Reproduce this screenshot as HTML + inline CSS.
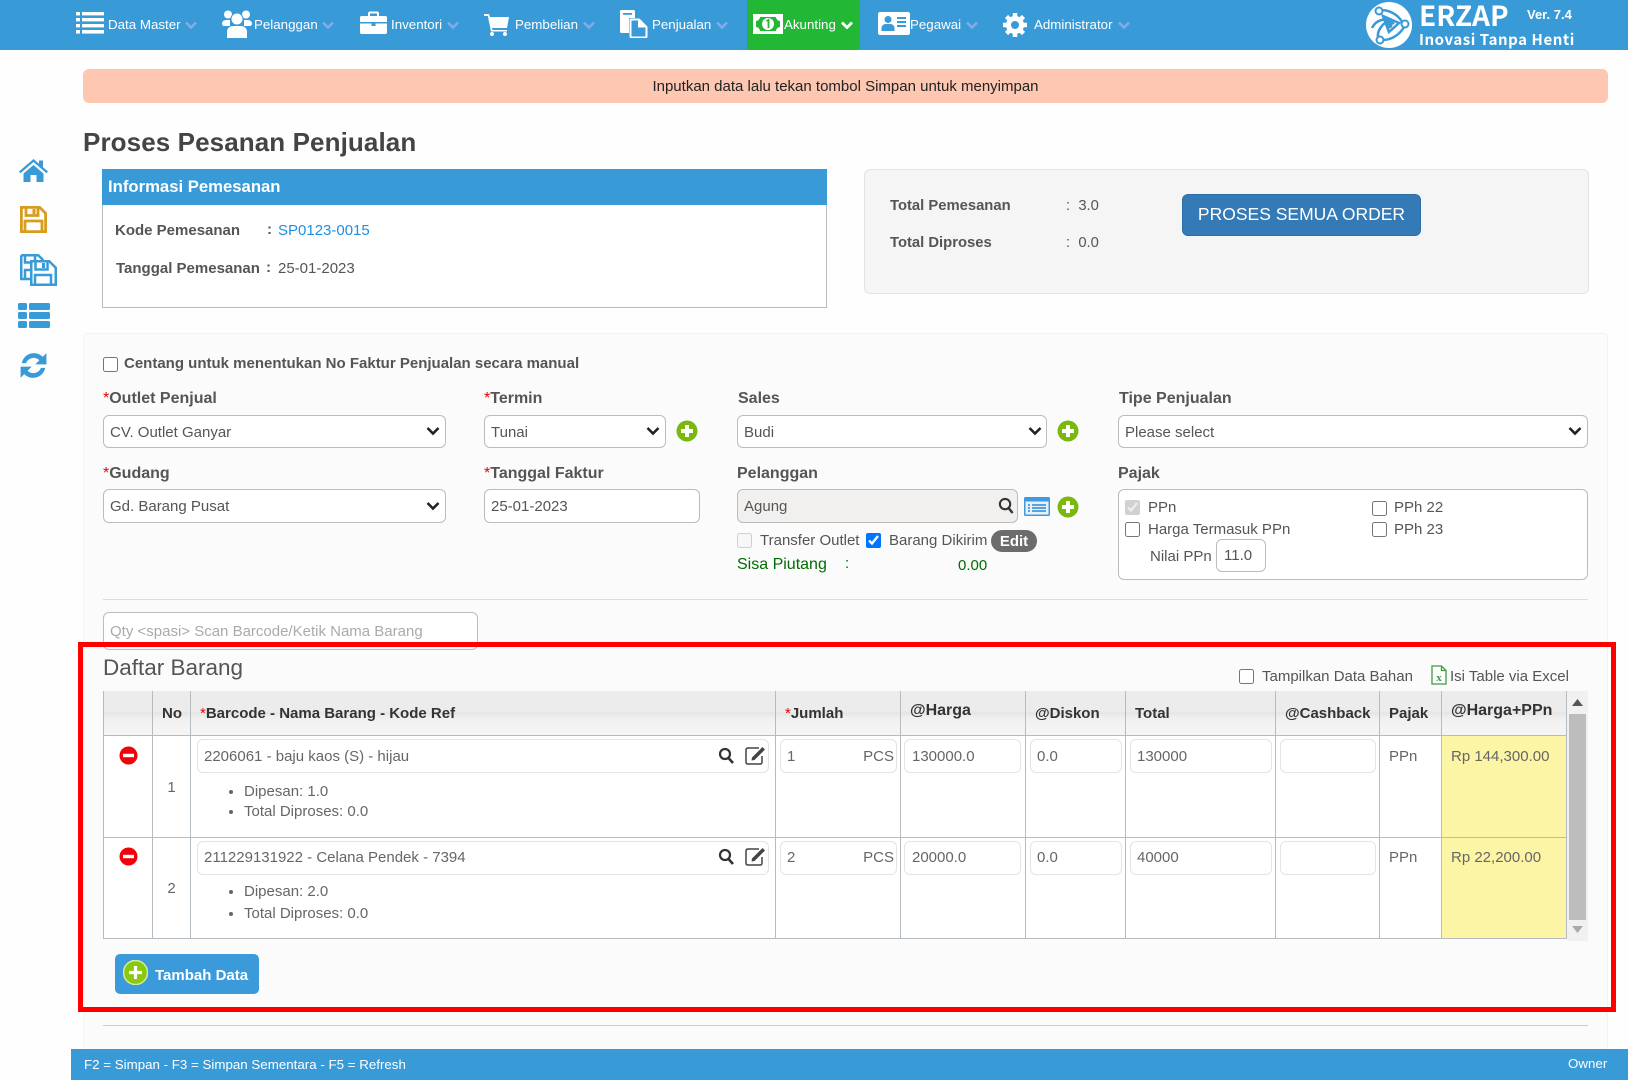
<!DOCTYPE html>
<html lang="id">
<head>
<meta charset="utf-8">
<title>Proses Pesanan Penjualan</title>
<style>
*{box-sizing:border-box}
html,body{margin:0;padding:0}
body{width:1628px;height:1080px;position:relative;overflow:hidden;background:#fefefe;font-family:"Liberation Sans",Arial,sans-serif;font-size:15px;color:#555}
.a{position:absolute}
.t{position:absolute;line-height:20px;white-space:nowrap}
.nav{position:absolute;left:0;top:0;width:1628px;height:50px;background:#399ad8}
.nav .t{color:#fff;font-size:13.33px;top:15px}
.nav svg{position:absolute}
.chev{position:absolute;top:21px;width:12px;height:9px}
.lb{font-weight:bold;font-size:16px;color:#555}
.lb i{color:#e00;font-style:normal;font-weight:normal}
select,input[type=text]{position:absolute;margin:0;background:#fff;border:1px solid #bcbcbc;border-radius:6px;font:15px "Liberation Sans",Arial,sans-serif;color:#555;padding:0 6px;outline:none}
select{-webkit-appearance:none;appearance:none;padding-top:2px}
input::placeholder{color:#aaa;opacity:1}
.sc{position:absolute;width:14px;height:10px;pointer-events:none}
input[type=checkbox]{position:absolute;margin:0;width:15px;height:15px}
.grid{position:absolute;left:103px;top:691px;width:1463px;border-collapse:collapse;table-layout:fixed;font-size:15px;color:#666}
.grid th,.grid td{border:1px solid #b4bcc2;position:relative;padding:0;vertical-align:top}
.grid th{height:44px;border-top:0;background:linear-gradient(#ececec 0,#ececec 45%,#e5e5e5 50%,#f0f0f0 60%,#f5f5f5 100%);text-align:left;font-size:15px;color:#333;font-weight:bold}
.grid th span{position:absolute;left:9px;top:13px;line-height:20px;white-space:nowrap}
.grid th span.up{top:10px;font-size:16px}
.grid th i{color:#e00;font-style:normal;font-weight:normal}
.grid td{background:#fff}
.grid input[type=text]{left:4px;top:3px;height:34px;border:1px solid #e4e4e4;color:#666;font-size:15px}
.grid input.r1[type=text]{padding-top:2px}
.grid ul{position:absolute;left:34px;margin:0;padding:0 0 0 19px;font-size:15px;color:#666}
.celltxt{position:absolute;left:9px;top:11px;line-height:20px;white-space:nowrap}
.no{position:absolute;left:0;right:0;text-align:center;line-height:20px}
</style>
</head>
<body>

<div class="nav">
  <svg style="left:76px;top:12px" width="28" height="22" viewBox="0 0 28 22" fill="#fff"><rect x="0" y="0" width="4" height="3.4"/><rect x="6" y="0" width="22" height="3.4"/><rect x="0" y="6" width="4" height="3.4"/><rect x="6" y="6" width="22" height="3.4"/><rect x="0" y="12" width="4" height="3.4"/><rect x="6" y="12" width="22" height="3.4"/><rect x="0" y="18" width="4" height="3.6"/><rect x="6" y="18" width="22" height="3.6"/></svg>
  <div class="t" style="left:108px">Data Master</div>
  <svg class="chev" style="left:185px" viewBox="0 0 12 9"><path d="M1 1.500l5 5 5-5" fill="none" stroke="#84abe8" stroke-width="2.6"/></svg>

  <svg style="left:222px;top:10px" width="30" height="28" viewBox="0 0 30 28" fill="#fff"><circle cx="6" cy="4.500" r="4"/><circle cx="24" cy="4.500" r="4"/><circle cx="15" cy="9" r="6" stroke="#399ad8" stroke-width="1"/><path d="M0 14c0-3 2-4 5-4h3v6H1zM30 14c0-3-2-4-5-4h-3v6h7z"/><path d="M5 28v-6c0-4 3-6 6-6h8c3 0 6 2 6 6v6z"/></svg>
  <div class="t" style="left:254px">Pelanggan</div>
  <svg class="chev" style="left:322px" viewBox="0 0 12 9"><path d="M1 1.500l5 5 5-5" fill="none" stroke="#84abe8" stroke-width="2.6"/></svg>

  <svg style="left:360px;top:11px" width="27" height="23" viewBox="0 0 27 23" fill="#fff"><path d="M8 5V2.500C8 1 9 .5 10 .5h7c1 0 2 .5 2 2V5h-2V2.500h-7V5z"/><path d="M1.500 5h24c.8 0 1.500.7 1.500 1.500V11H0V6.500C0 5.700.7 5 1.500 5z"/><path d="M0 12.500h11.500v2.500h4v-2.500H27v9c0 .8-.7 1.500-1.500 1.500h-24C.7 23 0 22.300 0 21.500z"/></svg>
  <div class="t" style="left:391px">Inventori</div>
  <svg class="chev" style="left:447px" viewBox="0 0 12 9"><path d="M1 1.500l5 5 5-5" fill="none" stroke="#84abe8" stroke-width="2.6"/></svg>

  <svg style="left:484px;top:14px" width="25" height="22" viewBox="0 0 25 22" fill="#fff"><path d="M0 0h5l1 3h19l-2 11H8l.5 2H23v1.500H7L3.800 2H0z"/><circle cx="8" cy="20" r="2"/><circle cx="21" cy="20" r="2"/></svg>
  <div class="t" style="left:515px">Pembelian</div>
  <svg class="chev" style="left:583px" viewBox="0 0 12 9"><path d="M1 1.500l5 5 5-5" fill="none" stroke="#84abe8" stroke-width="2.6"/></svg>

  <svg style="left:620px;top:10px" width="28" height="28" viewBox="0 0 28 28" fill="#fff"><path d="M1.500 0h12c.9 0 1.500.6 1.500 1.500V8h-4.500C8.500 8 9 9.500 9 11v12H1.500C.6 23 0 22.400 0 21.500v-20C0 .6.600 0 1.500 0z"/><rect x="3" y="3" width="9" height="1.800" fill="#399ad8"/><path d="M11 9.500h8l7.500 7.500v9.500c0 .5-.5 1-1 1H11.500c-.5 0-1-.5-1-1V10z" fill="#399ad8" stroke="#fff" stroke-width="2"/><path d="M18 9v8.500h8.500z"/></svg>
  <div class="t" style="left:652px">Penjualan</div>
  <svg class="chev" style="left:716px" viewBox="0 0 12 9"><path d="M1 1.500l5 5 5-5" fill="none" stroke="#84abe8" stroke-width="2.6"/></svg>

  <div class="a" style="left:747px;top:0;width:113px;height:50px;background:#22b735"></div>
  <svg style="left:753px;top:14px" width="30" height="20" viewBox="0 0 30 20"><rect x="0" y="0" width="30" height="20" fill="#fff"/><path d="M7 3h16c0 2 2 4 4 4v6c-2 0-4 2-4 4H7c0-2-2-4-4-4V7c2 0 4-2 4-4z" fill="#22b735"/><circle cx="15" cy="10" r="6" fill="#fff"/><path d="M13.500 7l2-1v8" fill="none" stroke="#22b735" stroke-width="1.800"/></svg>
  <div class="t" style="left:784px">Akunting</div>
  <svg class="chev" style="left:841px" viewBox="0 0 12 9"><path d="M1 1.500l5 5 5-5" fill="none" stroke="#fff" stroke-width="2.800"/></svg>

  <svg style="left:878px;top:12px" width="32" height="24" viewBox="0 0 32 24"><path d="M2 0h28c1 0 2 1 2 2v19c0 1-1 2-2 2H2c-1 0-2-1-2-2V2C0 1 1 0 2 0z" fill="#fff"/><circle cx="10" cy="7.500" r="3.500" fill="#399ad8"/><path d="M3.500 19v-3c0-2 2-4 4-4h5c2 0 4 2 4 4v3z" fill="#399ad8"/><path d="M19 6h9M19 10h9M19 14h9" stroke="#399ad8" stroke-width="2"/></svg>
  <div class="t" style="left:910px">Pegawai</div>
  <svg class="chev" style="left:966px" viewBox="0 0 12 9"><path d="M1 1.500l5 5 5-5" fill="none" stroke="#84abe8" stroke-width="2.6"/></svg>

  <svg style="left:1003px;top:13px" width="24" height="24" viewBox="0 0 24 24"><circle cx="12" cy="12" r="6.500" fill="none" stroke="#fff" stroke-width="5"/><g stroke="#fff" stroke-width="4.500"><path d="M12 0v5M12 19v5M0 12h5M19 12h5M3.500 3.500l3.500 3.500M17 17l3.500 3.500M3.500 20.500L7 17M17 7l3.500-3.500"/></g></svg>
  <div class="t" style="left:1034px">Administrator</div>
  <svg class="chev" style="left:1118px" viewBox="0 0 12 9"><path d="M1 1.500l5 5 5-5" fill="none" stroke="#84abe8" stroke-width="2.6"/></svg>

  <svg style="left:1366px;top:2px" width="46" height="46" viewBox="0 0 46 46"><circle cx="23" cy="23" r="23" fill="#fff"/><g fill="none" stroke="#399ad8" stroke-width="2.500"><path d="M11 10c8-5 22 2 26 12"/><path d="M6 26c4-8 14-12 22-4"/><path d="M13 38c-4-8 4-18 12-20"/><path d="M39 22c-2 8-12 16-22 16"/><path d="M17 14l6 16 10-9z"/></g><circle cx="23" cy="23" r="3.500" fill="#399ad8"/><circle cx="13" cy="9" r="3.500" fill="#fff" stroke="#399ad8" stroke-width="2"/><circle cx="39" cy="22" r="3.500" fill="#fff" stroke="#399ad8" stroke-width="2"/><circle cx="14" cy="38" r="3.500" fill="#fff" stroke="#399ad8" stroke-width="2"/></svg>
  <div class="t" style="left:1419px;top:-1px;font:bold 28px/32px 'Noto Sans CJK JP','Liberation Sans',sans-serif">ERZAP</div>
  <div class="t" style="left:1527px;top:5px;font-size:13px;font-weight:bold">Ver. 7.4</div>
  <div class="t" style="left:1419px;top:30px;font:bold 15px/20px 'Noto Sans CJK JP','Liberation Sans',sans-serif;letter-spacing:.55px">Inovasi Tanpa Henti</div>
</div>

<!-- left toolbar -->
<svg class="a" style="left:19px;top:159px" width="29" height="23" viewBox="0 0 29 23" fill="#399ad8"><path d="M14.500 0L0 12.500l1.500 1.800L14.500 3l13 11.300 1.500-1.800L24 8.200V1.500h-4v3.300z"/><path d="M4.500 14.500l10-8.500 10 8.500V23H17.500v-7h-6v7H4.500z"/></svg>
<svg class="a" style="left:20px;top:206px" width="27" height="27" viewBox="0 0 27 27" fill="none" stroke="#d89c1e" stroke-width="2.800"><path d="M1.400 1.400h18.300l5.900 5.900v18.300H1.400z"/><path d="M6 1.500v8h12v-8"/><rect x="12.500" y="3" width="3" height="5" fill="#d89c1e" stroke="none"/><path d="M5 25.500V15h17v10.500"/></svg>
<svg class="a" style="left:20px;top:254px" width="37" height="32" viewBox="0 0 37 32" fill="none" stroke="#399ad8" stroke-width="2.500"><path d="M1.250 1.250h17l5 5M1.250 1.250V25h9"/><path d="M5 1.500v7h10v-7"/><path d="M5 24v-8h5"/><path d="M11.250 7.250h18l6.500 6.500v17h-24.500z" fill="#fefefe"/><path d="M15.500 7.500v8h12v-8"/><rect x="22" y="9" width="3" height="5" fill="#399ad8" stroke="none"/><path d="M15 30.500V21h16v9.500"/></svg>
<svg class="a" style="left:18px;top:303px" width="32" height="25" viewBox="0 0 32 25" fill="#399ad8"><rect x="0" y="0" width="9" height="7" rx="1.500"/><rect x="11" y="0" width="21" height="7" rx="1.500"/><rect x="0" y="9" width="9" height="7" rx="1.500"/><rect x="11" y="9" width="21" height="7" rx="1.500"/><rect x="0" y="18" width="9" height="7" rx="1.500"/><rect x="11" y="18" width="21" height="7" rx="1.500"/></svg>
<svg class="a" style="left:20px;top:352px" width="27" height="27" viewBox="2 2 23 23" fill="#399ad8"><path d="M3.500 11.500C4.500 6.500 8.800 3 13.800 3c3 0 5.600 1.200 7.500 3.200L24.500 3v9.500H15l3.500-3.500c-1.200-1.300-2.900-2-4.700-2-3 0-5.700 1.900-6.600 4.500z"/><path d="M23.500 15.500C22.500 20.500 18.200 24 13.200 24c-3 0-5.600-1.200-7.500-3.200L2.500 24v-9.500H12L8.500 18c1.200 1.300 2.900 2 4.700 2 3 0 5.700-1.900 6.600-4.500z"/></svg>

<!-- alert -->
<div class="a" style="left:83px;top:69px;width:1525px;height:34px;background:#fec7b1;border-radius:6px;text-align:center;line-height:36px;color:#222;font-size:15px">Inputkan data lalu tekan tombol Simpan untuk menyimpan</div>

<div class="t" style="left:83px;top:129px;font-size:26px;line-height:26px;font-weight:bold;color:#444;letter-spacing:.1px">Proses Pesanan Penjualan</div>

<!-- info panel -->
<div class="a" style="left:102px;top:169px;width:725px;height:139px;background:#fff;border:1px solid #bbb;border-top:0">
  <div class="a" style="left:-1px;top:0;width:725px;height:36px;background:#399ad8;color:#fff;font-weight:bold;font-size:16.7px;line-height:35px;padding-left:6px">Informasi Pemesanan</div>
</div>
<div class="t" style="left:115px;top:221px;font-weight:bold;font-size:15px">Kode Pemesanan</div>
<div class="t" style="left:267px;top:220px;font-weight:bold">:</div>
<div class="t" style="left:278px;top:221px;color:#1e8fe0;font-size:15px">SP0123-0015</div>
<div class="t" style="left:116px;top:259px;font-weight:bold;font-size:15px">Tanggal Pemesanan</div>
<div class="t" style="left:266px;top:258px;font-weight:bold">:</div>
<div class="t" style="left:278px;top:259px;font-size:15px">25-01-2023</div>

<!-- total panel -->
<div class="a" style="left:864px;top:169px;width:725px;height:125px;background:#f5f5f5;border:1px solid #e3e3e3;border-radius:6px"></div>
<div class="t" style="left:890px;top:196px;font-weight:bold;font-size:14.8px">Total Pemesanan</div>
<div class="t" style="left:1066px;top:196px;font-size:14.8px">:&nbsp; 3.0</div>
<div class="t" style="left:890px;top:233px;font-weight:bold;font-size:14.8px">Total Diproses</div>
<div class="t" style="left:1066px;top:233px;font-size:14.8px">:&nbsp; 0.0</div>
<div class="a" style="left:1182px;top:194px;width:239px;height:42px;background:#337ab7;border:1px solid #2e6da4;border-radius:6px;color:#fff;font-size:17.5px;line-height:38px;text-align:center">PROSES SEMUA ORDER</div>

<!-- form panel -->
<div class="a" style="left:83px;top:333px;width:1525px;height:716px;background:#fbfbfb;border:1px solid #f3f3f3;border-bottom:0;border-radius:4px 4px 0 0"></div>

<input type="checkbox" style="left:103px;top:357px">
<div class="t" style="left:124px;top:354px;font-weight:bold;font-size:15px">Centang untuk menentukan No Faktur Penjualan secara manual</div>

<div class="t lb" style="left:103px;top:389px"><i>*</i>Outlet Penjual</div>
<select style="left:103px;top:415px;width:343px;height:33px"><option>CV. Outlet Ganyar</option></select>
<svg class="sc" style="left:426px;top:426px" viewBox="0 0 14 10"><path d="M1.500 2l5.500 5.500L12.500 2" fill="none" stroke="#222" stroke-width="2.600"/></svg>
<div class="t lb" style="left:484px;top:389px"><i>*</i>Termin</div>
<select style="left:484px;top:415px;width:182px;height:33px"><option>Tunai</option></select>
<svg class="sc" style="left:646px;top:426px" viewBox="0 0 14 10"><path d="M1.500 2l5.500 5.500L12.500 2" fill="none" stroke="#222" stroke-width="2.600"/></svg>
<svg class="a" style="left:676px;top:420px" width="22" height="22" viewBox="0 0 22 22"><circle cx="11" cy="11" r="10.500" fill="#7ab80e"/><path d="M11 5v12M5 11h12" stroke="#fff" stroke-width="4"/></svg>
<div class="t lb" style="left:738px;top:389px">Sales</div>
<select style="left:737px;top:415px;width:310px;height:33px"><option>Budi</option></select>
<svg class="sc" style="left:1028px;top:426px" viewBox="0 0 14 10"><path d="M1.500 2l5.500 5.500L12.500 2" fill="none" stroke="#222" stroke-width="2.600"/></svg>
<svg class="a" style="left:1057px;top:420px" width="22" height="22" viewBox="0 0 22 22"><circle cx="11" cy="11" r="10.500" fill="#7ab80e"/><path d="M11 5v12M5 11h12" stroke="#fff" stroke-width="4"/></svg>
<div class="t lb" style="left:1119px;top:389px">Tipe Penjualan</div>
<select style="left:1118px;top:415px;width:470px;height:33px"><option>Please select</option></select>
<svg class="sc" style="left:1568px;top:426px" viewBox="0 0 14 10"><path d="M1.500 2l5.500 5.500L12.500 2" fill="none" stroke="#222" stroke-width="2.600"/></svg>

<div class="t lb" style="left:103px;top:464px"><i>*</i>Gudang</div>
<select style="left:103px;top:489px;width:343px;height:34px;padding-top:0"><option>Gd. Barang Pusat</option></select>
<svg class="sc" style="left:426px;top:501px" viewBox="0 0 14 10"><path d="M1.500 2l5.500 5.500L12.500 2" fill="none" stroke="#222" stroke-width="2.600"/></svg>
<div class="t lb" style="left:484px;top:464px"><i>*</i>Tanggal Faktur</div>
<input type="text" value="25-01-2023" style="left:484px;top:489px;width:216px;height:34px">
<div class="t lb" style="left:737px;top:464px">Pelanggan</div>
<input type="text" value="Agung" style="left:737px;top:489px;width:281px;height:34px;background:#f2f0ef">
<svg class="a" style="left:998px;top:497px" width="16" height="17" viewBox="0 0 17 18" fill="none" stroke="#333" stroke-width="2.200"><circle cx="7.500" cy="7.500" r="5.500"/><path d="M11.500 12l4 5" stroke-width="2.600"/></svg>
<svg class="a" style="left:1024px;top:497px" width="26" height="19" viewBox="0 0 26 19"><rect width="26" height="19" rx="1.500" fill="#3f9ae0"/><rect x="1.500" y="4.500" width="23" height="13" fill="#e6f2fb"/><path d="M4 8h2M8 8h14M4 11h2M8 11h14M4 14h2M8 14h14" stroke="#2f86cf" stroke-width="1.500"/></svg>
<svg class="a" style="left:1057px;top:496px" width="22" height="22" viewBox="0 0 22 22"><circle cx="11" cy="11" r="10.500" fill="#7ab80e"/><path d="M11 5v12M5 11h12" stroke="#fff" stroke-width="4"/></svg>

<input type="checkbox" disabled style="left:737px;top:533px">
<div class="t" style="left:760px;top:531px">Transfer Outlet</div>
<input type="checkbox" checked style="left:866px;top:533px">
<div class="t" style="left:889px;top:531px">Barang Dikirim</div>
<div class="a" style="left:991px;top:530px;width:46px;height:22px;border-radius:11px;background:#6c6c6c;color:#fff;font-weight:bold;font-size:15px;line-height:23px;text-align:center">Edit</div>
<div class="t" style="left:737px;top:555px;color:#006b00;font-size:16px">Sisa Piutang</div>
<div class="t" style="left:845px;top:554px;color:#006b00">:</div>
<div class="t" style="left:958px;top:556px;color:#006b00;font-size:15px">0.00</div>

<div class="t lb" style="left:1118px;top:464px">Pajak</div>
<div class="a" style="left:1118px;top:489px;width:470px;height:91px;background:#fff;border:1px solid #bcbcbc;border-radius:6px"></div>
<input type="checkbox" checked disabled style="left:1125px;top:500px">
<div class="t" style="left:1148px;top:498px">PPn</div>
<input type="checkbox" style="left:1125px;top:522px">
<div class="t" style="left:1148px;top:520px">Harga Termasuk PPn</div>
<input type="checkbox" style="left:1372px;top:501px">
<div class="t" style="left:1394px;top:498px">PPh 22</div>
<input type="checkbox" style="left:1372px;top:522px">
<div class="t" style="left:1394px;top:520px">PPh 23</div>
<div class="t" style="left:1150px;top:547px">Nilai PPn</div>
<input type="text" value="11.0" style="left:1216px;top:539px;width:50px;height:33px;padding-left:7px">

<div class="a" style="left:103px;top:599px;width:1485px;height:1px;background:#ddd"></div>
<input type="text" placeholder="Qty <spasi> Scan Barcode/Ketik Nama Barang" style="left:103px;top:612px;width:375px;height:38px">

<!-- red highlight -->
<div class="a" style="left:78px;top:642px;width:1538px;height:370px;border:5px solid #f00;z-index:5"></div>

<div class="t" style="left:103px;top:653px;font-size:22.5px;line-height:30px;color:#555">Daftar Barang</div>
<input type="checkbox" style="left:1239px;top:669px">
<div class="t" style="left:1262px;top:667px">Tampilkan Data Bahan</div>
<svg class="a" style="left:1431px;top:665px" width="16" height="20" viewBox="0 0 16 20" fill="none" stroke="#3f9a3f" stroke-width="1.300"><path d="M1 1h9.500L15 5.500V19H1z" fill="#fff"/><path d="M10.500 1v4.500H15"/><text x="8" y="16" font-family="Liberation Serif,serif" font-size="11" font-weight="bold" text-anchor="middle" fill="#3f9a3f" stroke="none">x</text></svg>
<div class="t" style="left:1450px;top:667px">Isi Table via Excel</div>

<table class="grid">
<colgroup><col style="width:49px"><col style="width:38px"><col style="width:585px"><col style="width:125px"><col style="width:125px"><col style="width:100px"><col style="width:150px"><col style="width:104px"><col style="width:62px"><col style="width:125px"></colgroup>
<tr>
<th></th>
<th><span>No</span></th>
<th><span><i>*</i>Barcode - Nama Barang - Kode Ref</span></th>
<th><span><i>*</i>Jumlah</span></th>
<th><span class="up">@Harga</span></th>
<th><span>@Diskon</span></th>
<th><span>Total</span></th>
<th><span>@Cashback</span></th>
<th><span>Pajak</span></th>
<th><span class="up">@Harga+PPn</span></th>
</tr>
<tr style="height:102px">
<td><svg class="a" style="left:15px;top:10px" width="19" height="19" viewBox="0 0 19 19"><circle cx="9.500" cy="9.500" r="9" fill="#f5000a"/><rect x="4" y="7.800" width="11" height="3.400" fill="#fff"/></svg></td>
<td><div class="no" style="top:42px">1</div></td>
<td><input class="r1" type="text" value="2206061 - baju kaos (S) - hijau" style="width:572px;left:6px">
<svg class="a" style="left:527px;top:11px" width="17" height="18" viewBox="0 0 17 18" fill="none" stroke="#333" stroke-width="2.200"><circle cx="7" cy="7" r="5"/><path d="M10.500 11l4.500 5" stroke-width="2.600"/></svg>
<svg class="a" style="left:554px;top:9px" width="22" height="20" viewBox="0 0 22 20" fill="none" stroke="#444" stroke-width="1.500"><path d="M14 3H3C1.800 3 1 3.800 1 5v12c0 1.200.8 2 2 2h12c1.200 0 2-.8 2-2v-6"/><path d="M7 12.500L17.500 2l2.500 2.500L9.500 15l-3 .5z" fill="#444" stroke="none"/></svg>
<ul style="top:46px;line-height:20px"><li>Dipesan: 1.0</li><li>Total Diproses: 0.0</li></ul></td>
<td><input class="r1" type="text" value="1" style="width:117px"><div class="a" style="right:4px;top:11px;line-height:20px;padding-right:2px">PCS</div></td>
<td><input class="r1" type="text" value="130000.0" style="width:117px;left:3px;padding-left:7px"></td>
<td><input class="r1" type="text" value="0.0" style="width:92px"></td>
<td><input class="r1" type="text" value="130000" style="width:142px"></td>
<td><input type="text" value="" style="width:96px"></td>
<td><div class="celltxt">PPn</div></td>
<td style="background:#fcf5a5"><div class="celltxt">Rp 144,300.00</div></td>
</tr>
<tr style="height:101px">
<td><svg class="a" style="left:15px;top:9px" width="19" height="19" viewBox="0 0 19 19"><circle cx="9.500" cy="9.500" r="9" fill="#f5000a"/><rect x="4" y="7.800" width="11" height="3.400" fill="#fff"/></svg></td>
<td><div class="no" style="top:41px">2</div></td>
<td><input type="text" value="211229131922 - Celana Pendek - 7394" style="width:572px;left:6px">
<svg class="a" style="left:527px;top:10px" width="17" height="18" viewBox="0 0 17 18" fill="none" stroke="#333" stroke-width="2.200"><circle cx="7" cy="7" r="5"/><path d="M10.500 11l4.500 5" stroke-width="2.600"/></svg>
<svg class="a" style="left:554px;top:8px" width="22" height="20" viewBox="0 0 22 20" fill="none" stroke="#444" stroke-width="1.500"><path d="M14 3H3C1.800 3 1 3.800 1 5v12c0 1.200.8 2 2 2h12c1.200 0 2-.8 2-2v-6"/><path d="M7 12.500L17.500 2l2.500 2.500L9.500 15l-3 .5z" fill="#444" stroke="none"/></svg>
<ul style="top:43px;line-height:22px"><li>Dipesan: 2.0</li><li>Total Diproses: 0.0</li></ul></td>
<td><input type="text" value="2" style="width:117px"><div class="a" style="right:4px;top:10px;line-height:20px;padding-right:2px">PCS</div></td>
<td><input type="text" value="20000.0" style="width:117px;left:3px;padding-left:7px"></td>
<td><input type="text" value="0.0" style="width:92px"></td>
<td><input type="text" value="40000" style="width:142px"></td>
<td><input type="text" value="" style="width:96px"></td>
<td><div class="celltxt" style="top:10px">PPn</div></td>
<td style="background:#fcf5a5"><div class="celltxt" style="top:10px">Rp 22,200.00</div></td>
</tr>
</table>

<!-- scrollbar -->
<div class="a" style="left:1567px;top:691px;width:21px;height:250px;background:#f1f1f1"></div>
<div class="a" style="left:1569px;top:714px;width:17px;height:206px;background:#bdbdbd"></div>
<svg class="a" style="left:1571px;top:698px" width="13" height="9" viewBox="0 0 13 9"><path d="M6.500 1L12 8H1z" fill="#555"/></svg>
<svg class="a" style="left:1571px;top:925px" width="13" height="9" viewBox="0 0 13 9"><path d="M6.500 8L12 1H1z" fill="#aaa"/></svg>

<!-- add button -->
<div class="a" style="left:115px;top:954px;width:144px;height:40px;background:#3b9ad9;border-radius:5px"></div>
<svg class="a" style="left:123px;top:960px" width="25" height="25" viewBox="0 0 25 25"><circle cx="12.500" cy="12.500" r="12" fill="#8ac90f" stroke="#d3ec9a" stroke-width="1.500"/><path d="M12.500 6v13M6 12.500h13" stroke="#fff" stroke-width="3.200"/></svg>
<div class="t" style="left:155px;top:966px;color:#fff;font-weight:bold;font-size:15px">Tambah Data</div>

<div class="a" style="left:103px;top:1025px;width:1485px;height:1px;background:#ccc"></div>

<!-- footer -->
<div class="a" style="left:71px;top:1049px;width:1557px;height:31px;background:#399ad8;color:#fff"></div>
<div class="t" style="left:84px;top:1055px;color:#fff;font-size:13.33px">F2 = Simpan - F3 = Simpan Sementara - F5 = Refresh</div>
<div class="t" style="left:1568px;top:1054px;color:#fff;font-size:13.33px">Owner</div>

</body>
</html>
